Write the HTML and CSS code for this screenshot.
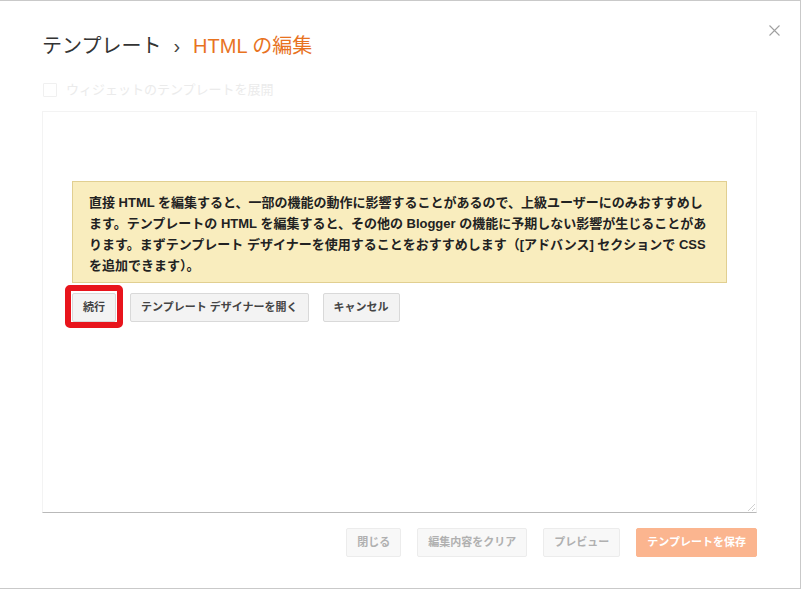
FILE: index.html
```html
<!DOCTYPE html>
<html lang="ja">
<head>
<meta charset="utf-8">
<title>HTML の編集</title>
<link rel="stylesheet" href="styles.css">
</head>
<body>
<div class="dialog">
  <button class="close" aria-label="閉じる">
    <svg width="11" height="11" viewBox="0 0 11 11"><path d="M0.5 0.5 L10.5 10.5 M10.5 0.5 L0.5 10.5" stroke="#a0a0a0" stroke-width="1.1" fill="none"/></svg>
  </button>
  <h1 class="title"><span class="crumb">テンプレート</span><span class="sep">›</span><span class="current">HTML の編集</span></h1>
  <label class="expand"><span class="box"></span><span class="expand-label">ウィジェットのテンプレートを展開</span></label>
  <div class="editor">
    <div class="warning">直接 HTML を編集すると、一部の機能の動作に影響することがあるので、上級ユーザーにのみおすすめし<br>ます。テンプレートの HTML を編集すると、その他の Blogger の機能に予期しない影響が生じることがあ<br>ります。まずテンプレート デザイナーを使用することをおすすめします（[アドバンス] セクションで CSS<br>を追加できます）。</div>
    <div class="actions">
      <button class="btn highlighted">続行</button>
      <button class="btn">テンプレート デザイナーを開く</button>
      <button class="btn">キャンセル</button>
    </div>
    <svg class="grip" width="10" height="10" viewBox="0 0 10 10"><path d="M9 2 L2 9 M9 6 L6 9" stroke="#d0d0d0" stroke-width="1" fill="none"/></svg>
  </div>
  <div class="footer">
    <button class="fbtn">閉じる</button>
    <button class="fbtn">編集内容をクリア</button>
    <button class="fbtn">プレビュー</button>
    <button class="fbtn save">テンプレートを保存</button>
  </div>
</div>
</body>
</html>
```
FILE: styles.css
```css
html, body {
  margin: 0;
  padding: 0;
  background: #fff;
}
body {
  font-family: "Liberation Sans", "Noto Sans CJK JP", sans-serif;
  color: #333;
}
.dialog {
  position: relative;
  box-sizing: border-box;
  width: 801px;
  height: 589px;
  border: 1px solid #c9c9c9;
  border-left: none;
  padding: 33px 43px 0 42px;
  display: flex;
  flex-direction: column;
}
.close {
  position: absolute;
  top: 24px;
  right: 20px;
  width: 11px;
  height: 11px;
  padding: 0;
  border: none;
  background: none;
  display: block;
}
.close svg { display: block; }
.title {
  margin: 0;
  font-size: 20px;
  font-weight: normal;
  line-height: 24px;
  height: 24px;
  white-space: nowrap;
}
.crumb { color: #333; }
.sep {
  color: #444;
  margin: 0 13px 0 12px;
}
.current { color: #e8731f; }
.expand {
  margin-top: 24px;
  height: 16px;
  display: flex;
  align-items: center;
  gap: 9px;
  font-size: 13px;
  line-height: 16px;
  color: #ebebeb;
}
.box {
  width: 12px;
  height: 12px;
  border: 1px solid #f0f0f0;
  border-radius: 1px;
  margin-left: 1px;
}
.editor {
  position: relative;
  margin-top: 13px;
  height: 402px;
  box-sizing: border-box;
  border: 1px solid #f3f3f3;
  border-bottom-color: #b9b9b9;
  padding: 69px 29px 0 29px;
}
.warning {
  box-sizing: border-box;
  height: 102px;
  background: #f9edbe;
  border: 1px solid #e1cf91;
  padding: 10px 16px 6px;
  font-size: 13px;
  font-weight: bold;
  line-height: 21px;
  color: #222;
  white-space: nowrap;
}
.actions {
  margin-top: 10px;
  display: flex;
  gap: 14px;
}
.btn {
  position: relative;
  height: 29px;
  padding: 0 10px;
  border: 1px solid #d9d9d9;
  border-radius: 2px;
  background: #f3f3f3;
  font-family: inherit;
  font-size: 11px;
  font-weight: bold;
  color: #444;
  line-height: 27px;
}
.highlighted::after {
  content: "";
  position: absolute;
  left: -8px;
  right: -8px;
  top: -9px;
  bottom: -7px;
  border: 6px solid #e8141c;
  border-radius: 5px;
}
.grip {
  position: absolute;
  right: 0;
  bottom: 0;
}
.footer {
  margin-top: 15px;
  display: flex;
  justify-content: flex-end;
  gap: 16px;
}
.fbtn {
  height: 29px;
  padding: 0 10px;
  border: 1px solid #ececec;
  border-radius: 2px;
  background: #f8f8f8;
  font-family: inherit;
  font-size: 11px;
  font-weight: bold;
  color: #b0b0b0;
  line-height: 27px;
}
.fbtn.save {
  background: #fbb58f;
  border-color: #fbb58f;
  color: #fff;
}
```
